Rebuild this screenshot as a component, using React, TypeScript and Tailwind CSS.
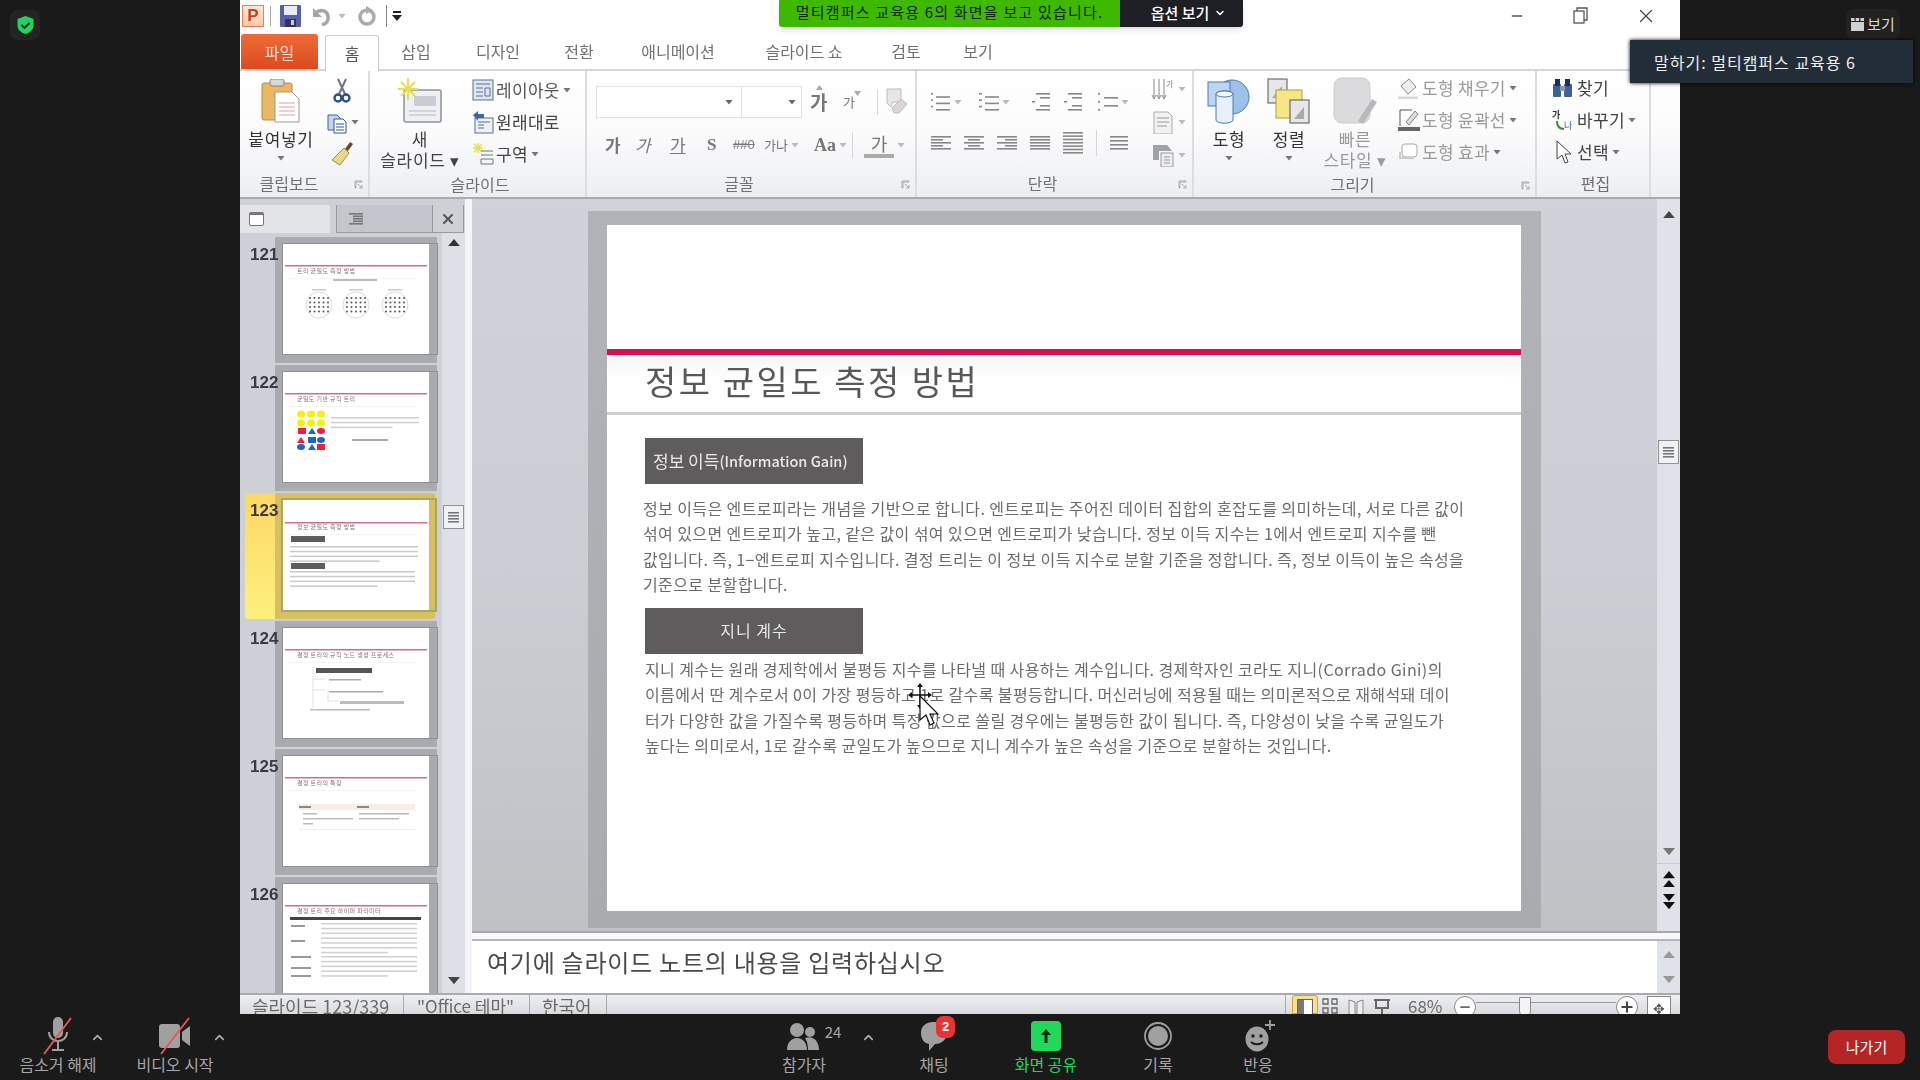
import React from "react";
import { ChevronUp, ChevronDown, Minus, X, Plus } from "lucide-react";

const Caret = ({ c = "#777" }: { c?: string }) => (
  <svg width="8" height="6" viewBox="0 0 8 6" className="shrink-0 mx-[3px]"><path d="M0.5 1h7L4 5.5z" fill={c} /></svg>
);

const Lines = ({ w, c = "#888", h = 20, wd = 20 }: { w: number[][]; c?: string; h?: number; wd?: number }) => (
  <svg width={wd} height={h} viewBox={`0 0 ${wd} ${h}`} className="shrink-0">
    {w.map((l, i) => (
      <rect key={i} x={l[0]} y={(i * (h - 2)) / Math.max(1, w.length - 1)} width={l[1]} height="1.6" fill={c} />
    ))}
  </svg>
);

const Launcher = () => (
  <svg width="10" height="10" viewBox="0 0 10 10"><path d="M1 1h7v1H2v6H1zM4 4l4 4M8 5v3H5" stroke="#aaa" fill="none" strokeWidth="1" /></svg>
);

const Group = ({ w, label, launcher, labelCls = "", children }: { w: string; label: string; launcher?: boolean; labelCls?: string; children: React.ReactNode }) => (
  <div className={`${w} h-full shrink-0 flex flex-col border-r-2 border-[#dcdde0]`}>
    <div className="h-[99px] flex">{children}</div>
    <div className="h-[28px] flex items-center relative">
      <span className={`flex-1 text-center text-[16px] leading-[20px] text-[#707070] ${labelCls}`}>{label}</span>
      {launcher && <span className="absolute right-[4px] top-[11px]"><Launcher /></span>}
    </div>
  </div>
);

const Row = ({ icon, text, caret, color = "#555", iw = "w-[26px]" }: { icon: React.ReactNode; text: string; caret?: boolean; color?: string; iw?: string }) => (
  <div className="h-[32px] flex items-center whitespace-nowrap">
    <span className={`${iw} flex justify-center shrink-0`}>{icon}</span>
    <span className="text-[17px] tracking-[0.3px]" style={{ color }}>{text}</span>
    {caret && <Caret />}
  </div>
);

const Big = ({ w, icon, lines, color = "#333", caret = true }: { w: string; icon: React.ReactNode; lines: string[]; color?: string; caret?: boolean }) => (
  <div className={`${w} shrink-0 flex flex-col items-center pt-[8px]`}>
    <div className="h-[44px] flex items-center justify-center">{icon}</div>
    <div className="mt-[5px] text-[17px] tracking-[0.7px] leading-[21px] text-center whitespace-nowrap" style={{ color }}>
      {lines.map((l) => <div key={l}>{l}</div>)}
    </div>
    {caret && lines.length === 1 && <div className="mt-[6px]"><Caret /></div>}
  </div>
);

const DocIcon = () => (
  <svg width="22" height="24" viewBox="0 0 22 24"><path d="M2 5h9l3 3v12H2z" fill="#c6d6ee" stroke="#39609e" /><path d="M8 9h9l3 3v11H8z" fill="#fff" stroke="#2f5597" /><path d="M10 14h8M10 17h8M10 20h8" stroke="#2f5597" /></svg>
);

const Ribbon = () => (
  <div className="h-[128px] flex bg-gradient-to-b from-[#ffffff] via-[#fbfbfc] to-[#eceef1] border-b-2 border-[#a9abaf]">
    <Group w="w-[130px]" label="클립보드" launcher labelCls="pr-[30px]">
      <Big
        w="w-[82px]"
        lines={["붙여넣기"]}
        icon={
          <svg width="40" height="44" viewBox="0 0 40 44">
            <rect x="1" y="4" width="30" height="37" rx="2" fill="#eab765" stroke="#b98a40" />
            <rect x="9" y="0" width="14" height="7" rx="2" fill="#d8d8d8" stroke="#888" />
            <path d="M14 13h17l7 7v23H14z" fill="#fff" stroke="#999" />
            <path d="M18 24h16M18 28h16M18 32h16M18 36h16" stroke="#d9a0a0" />
          </svg>
        }
      />
      <div className="flex flex-col pt-[4px]">
        <div className="h-[32px] w-[40px] flex justify-center items-center">
          <svg width="18" height="26" viewBox="0 0 18 26"><path d="M5 1l7 15M13 1L6 16" stroke="#6d7480" strokeWidth="2" /><circle cx="5" cy="20" r="3.5" fill="none" stroke="#2c4d95" strokeWidth="2.4" /><circle cx="13" cy="20" r="3.5" fill="none" stroke="#2c4d95" strokeWidth="2.4" /></svg>
        </div>
        <div className="h-[30px] flex items-center pl-[4px]"><DocIcon /><Caret /></div>
        <div className="h-[32px] w-[40px] flex justify-center items-center">
          <svg width="24" height="26" viewBox="0 0 24 26"><path d="M15 9l5-7 3 2-5 7z" fill="#6b4a2a" /><path d="M14 8l5 5-9 12-8-5z" fill="#ecd88a" stroke="#9a8a50" /></svg>
        </div>
      </div>
    </Group>
    <Group w="w-[217px]" label="슬라이드" labelCls="pl-[5px]">
      <Big
        w="w-[100px]"
        lines={["새", "슬라이드 ▾"]}
        color="#444"
        icon={
          <svg width="44" height="46" viewBox="0 0 44 46">
            <rect x="6" y="12" width="37" height="32" rx="2" fill="#eef0f3" stroke="#8f9299" strokeWidth="1.5" />
            <rect x="16" y="18" width="22" height="10" fill="#c9ccd2" />
            <path d="M11 33h27M11 37h27" stroke="#b5b8be" />
            <path d="M10 0v22M0 11h20M3 4l14 14M17 4L3 18" stroke="#e9df4f" strokeWidth="2" />
          </svg>
        }
      />
      <div className="flex flex-col pt-[3px]">
        <Row icon={<svg width="22" height="22" viewBox="0 0 22 22"><rect x="1" y="1" width="20" height="20" fill="#dfe6f1" stroke="#5d6f8f" /><path d="M4 5h14M4 9h7M4 13h7M4 17h7M13 9h5v8h-5z" stroke="#5d6f8f" fill="none" /></svg>} text="레이아웃" caret color="#555" />
        <Row icon={<svg width="22" height="24" viewBox="0 0 22 24"><rect x="3" y="8" width="18" height="15" fill="#eef2f8" stroke="#5d6f8f" /><path d="M6 12h12M6 15h6M6 18h6" stroke="#5d6f8f" /><path d="M1 5l5-4v3h6v4H6v3z" fill="#3c66b5" /></svg>} text="원래대로" color="#444" />
        <Row icon={<svg width="22" height="22" viewBox="0 0 22 22"><path d="M6 0v10M1 5h10M2 1l8 8M10 1L2 9" stroke="#e9df4f" strokeWidth="1.5" /><path d="M9 8h12M9 12h12M9 16h12v5H9z" stroke="#777" fill="none" /></svg>} text="구역" caret color="#444" />
      </div>
    </Group>
    <Group w="w-[330px]" label="글꼴" launcher labelCls="pr-[24px]">
      <div className="flex flex-col pl-[9px] pt-[15px]">
        <div className="h-[32px] flex items-center">
          <div className="w-[146px] h-[32px] border border-[#dfe1e5] bg-white flex items-center justify-end pr-[5px]"><Caret c="#666" /></div>
          <div className="w-[60px] h-[32px] border border-l-0 border-[#dfe1e5] bg-white flex items-center justify-end pr-[2px]"><Caret c="#666" /></div>
          <span className="ml-[8px] w-[30px] text-[19px] font-bold text-[#777] relative">가<span className="absolute left-[6px] -top-[3px]"><svg width="7" height="5"><path d="M0 5h7L3.5 0z" fill="#aaa" /></svg></span></span>
          <span className="ml-[3px] w-[28px] text-[13px] text-[#777] relative">가<span className="absolute left-[11px] -top-[1px]"><svg width="7" height="5"><path d="M0 0h7L3.5 5z" fill="#aaa" /></svg></span></span>
          <span className="ml-[6px] w-px h-[26px] bg-[#d5d6d9]" />
          <svg className="ml-[7px]" width="24" height="28" viewBox="0 0 24 28"><path d="M2 1h14v13H8l-2 5-4-4z" fill="#e6e6e6" stroke="#bbb" /><path d="M7 20l9-9 6 5-8 9H9z" fill="#dcd4d6" stroke="#bbb" /></svg>
        </div>
        <div className="h-[30px] mt-[12px] flex items-center text-[#777]">
          <span className="w-[32px] pl-[9px] text-[17px] font-bold">가</span>
          <span className="w-[33px] pl-[7px] text-[17px] italic">가</span>
          <span className="w-[35px] pl-[9px] text-[17px] underline">가</span>
          <span className="w-[34px] pl-[11px] text-[17px] font-bold font-['Liberation_Serif',serif]">S</span>
          <span className="w-[34px] pl-[3px] text-[13px] line-through font-['Liberation_Sans',sans-serif]">##0</span>
          <span className="w-[46px] pl-[0px] text-[13px] leading-[12px] flex items-center">가나<Caret c="#bbb" /></span>
          <span className="w-[42px] pl-[4px] text-[18px] font-bold font-['Liberation_Serif',serif] flex items-center">Aa<Caret c="#bbb" /></span>
          <span className="w-px h-[26px] bg-[#d5d6d9]" />
          <span className="ml-[11px] w-[30px] text-[18px] border-b-[4px] border-[#aaa] leading-[22px] text-center">가</span>
          <Caret c="#bbb" />
        </div>
      </div>
    </Group>
    <Group w="w-[277px]" label="단락" launcher labelCls="pr-[24px]">
      <div className="flex flex-col pl-[14px] pt-[18px] w-[216px]">
        <div className="h-[26px] flex items-center">
          <Lines w={[[0, 2], [5, 14], [0, 2], [5, 14], [0, 2], [5, 14]]} h={18} />
          <Caret c="#bbb" />
          <span className="w-[14px]" />
          <Lines w={[[0, 3], [6, 14], [0, 3], [6, 14], [0, 3], [6, 14]]} h={18} />
          <Caret c="#bbb" />
          <span className="w-[19px]" />
          <Lines w={[[4, 14], [8, 10], [0, 3], [8, 10], [4, 14]]} h={18} />
          <span className="w-[12px]" />
          <Lines w={[[4, 14], [8, 10], [0, 3], [8, 10], [4, 14]]} h={18} />
          <span className="w-[14px]" />
          <Lines w={[[0, 2], [6, 14], [0, 2], [6, 14], [0, 2]]} h={18} />
          <Caret c="#bbb" />
        </div>
        <div className="h-[26px] mt-[15px] flex items-center gap-[13px]">
          <Lines w={[[0, 20], [0, 12], [0, 20], [0, 12], [0, 20]]} h={14} />
          <Lines w={[[0, 20], [4, 12], [0, 20], [4, 12], [0, 20]]} h={14} />
          <Lines w={[[0, 20], [8, 12], [0, 20], [8, 12], [0, 20]]} h={14} />
          <Lines w={[[0, 20], [0, 20], [0, 20], [0, 20], [0, 20]]} h={14} />
          <Lines w={[[0, 20], [0, 20], [0, 20], [0, 20], [0, 20], [0, 20], [0, 20]]} h={22} />
          <span className="w-px h-[26px] bg-[#d5d6d9]" />
          <Lines w={[[0, 18], [0, 18], [0, 18], [0, 18]]} h={14} wd={18} />
        </div>
      </div>
      <div className="flex flex-col pt-[5px] pl-[18px] gap-[7px]">
        <div className="flex items-center h-[26px]"><svg width="24" height="24" viewBox="0 0 24 24"><path d="M3 2v18M8 2v18M13 2v18M1 18l2 4 2-4M6 18l2 4 2-4M11 18l2 4 2-4" stroke="#888" fill="none" /><text x="15" y="10" fontSize="8" fill="#888">가</text></svg><Caret c="#bbb" /></div>
        <div className="flex items-center h-[26px]"><svg width="24" height="24" viewBox="0 0 24 24"><path d="M3 2h14l4 4v18H3z" fill="#f2f2f2" stroke="#aaa" /><path d="M6 8h12M6 12h12M6 16h10" stroke="#999" /></svg><Caret c="#bbb" /></div>
        <div className="flex items-center h-[26px]"><svg width="24" height="24" viewBox="0 0 24 24"><path d="M2 2h14l5 6H8v9H2z" fill="#9fa3a9" /><rect x="10" y="10" width="12" height="14" fill="#eee" stroke="#999" /><path d="M13 14h6M13 17h6M13 20h6" stroke="#999" /></svg><Caret c="#bbb" /></div>
      </div>
    </Group>
    <Group w="w-[343px]" label="그리기" launcher labelCls="pr-[24px]">
      <Big
        w="w-[70px]"
        lines={["도형"]}
        icon={
          <svg width="44" height="46" viewBox="0 0 44 46">
            <circle cx="25" cy="19" r="17" fill="#9cc2ea" stroke="#4d79b5" />
            <rect x="1" y="4" width="22" height="24" fill="#bcd5f0" stroke="#4d79b5" />
            <path d="M9 16a8 3 0 0 1 17 0v26a8 3 0 0 1-17 0z" fill="#e6f1fb" stroke="#4d79b5" />
            <ellipse cx="17.500" cy="16" rx="8.500" ry="3" fill="#f4f9fe" stroke="#4d79b5" />
          </svg>
        }
      />
      <Big
        w="w-[50px]"
        lines={["정렬"]}
        icon={
          <svg width="44" height="46" viewBox="0 0 44 46">
            <rect x="1" y="1" width="19" height="24" fill="#e7e7e9" stroke="#555" />
            <path d="M5 20l10-12v12z" fill="#a9a9ad" />
            <rect x="9" y="12" width="26" height="28" fill="#f6e686" stroke="#b69c3a" />
            <rect x="23" y="22" width="19" height="23" fill="#e7e7e9" stroke="#555" />
            <path d="M27 41l10-12v12z" fill="#a9a9ad" />
          </svg>
        }
      />
      <Big
        w="w-[82px]"
        lines={["빠른", "스타일 ▾"]}
        color="#9a9a9a"
        icon={
          <svg width="46" height="48" viewBox="0 0 46 48">
            <rect x="2" y="1" width="36" height="45" rx="8" fill="#dbdadc" stroke="#ccc" />
            <path d="M26 44l14-22 5 3-14 22z" fill="#b9b8ba" />
          </svg>
        }
      />
      <div className="flex flex-col pt-[1px]">
        <Row color="#9a9a9a" icon={<svg width="22" height="22" viewBox="0 0 22 22"><path d="M3 9l8-7 7 8-8 7z" fill="#eee" stroke="#888" /><path d="M0 21h20" stroke="#d8d8d8" strokeWidth="3" /></svg>} text="도형 채우기" caret />
        <Row color="#9a9a9a" icon={<svg width="22" height="24" viewBox="0 0 22 24"><path d="M2 2h12M2 2v16" stroke="#555" /><path d="M8 14l9-11 3 3-9 11z" fill="#ddd" stroke="#888" /><rect x="0" y="19" width="22" height="4" fill="#666" /></svg>} text="도형 윤곽선" caret />
        <Row color="#9a9a9a" icon={<svg width="22" height="20" viewBox="0 0 22 20"><rect x="4" y="2" width="15" height="13" rx="3" fill="#fff" stroke="#aaa" /><path d="M2 10v6h14" stroke="#ccc" strokeWidth="2" fill="none" /></svg>} text="도형 효과" caret />
      </div>
    </Group>
    <Group w="w-[114px]" label="편집" labelCls="pl-[5px]">
      <div className="flex flex-col pt-[1px] pl-[11px]">
        <Row color="#444" iw="w-[29px]" icon={<svg width="22" height="20" viewBox="0 0 22 20"><rect x="1" y="6" width="8" height="13" rx="1" fill="#3c5f9e" /><rect x="12" y="6" width="8" height="13" rx="1" fill="#3c5f9e" /><rect x="3" y="1" width="5" height="7" fill="#222f55" /><rect x="13" y="1" width="5" height="7" fill="#222f55" /><rect x="8" y="8" width="5" height="5" fill="#8b96ac" /></svg>} text="찾기" />
        <Row color="#444" iw="w-[29px]" icon={<svg width="22" height="24" viewBox="0 0 22 24"><text x="0" y="10" fontSize="9" fontWeight="700" fill="#333">가</text><path d="M5 13c0 6 3 8 7 8" stroke="#3a8a3a" fill="none" strokeWidth="2" /><text x="12" y="21" fontSize="9" fill="#3c5f9e">나</text></svg>} text="바꾸기" caret />
        <Row color="#444" iw="w-[29px]" icon={<svg width="18" height="24" viewBox="0 0 18 24"><path d="M3 1v18l5-4 3 8 3-1-3-8h6z" fill="#fff" stroke="#444" /></svg>} text="선택" caret />
      </div>
    </Group>
    <div className="flex-1" />
  </div>
);

const Tabs = () => {
  const t: [string, string][] = [
    ["삽입", "w-[74px]"],
    ["디자인", "w-[90px]"],
    ["전환", "w-[72px]"],
    ["애니메이션", "w-[126px]"],
    ["슬라이드 쇼", "w-[126px]"],
    ["검토", "w-[78px]"],
    ["보기", "w-[66px]"],
  ];
  return (
    <div className="h-[36px] flex items-end bg-white border-b-2 border-[#d5d6d9] pl-[1px]">
      <div className="w-[77px] h-[35px] rounded-t-[3px] bg-gradient-to-b from-[#ef6a38] to-[#dd4a1d] text-[#ffe3d4] text-[16px] flex items-center justify-center">파일</div>
      <div className="ml-[7px] w-[54px] h-[36px] -mb-[2px] bg-white border border-b-0 border-[#c8c9cc] rounded-t-[3px] text-[#555] text-[16px] flex items-center justify-center pb-[2px]">홈</div>
      <div className="flex">
        {t.map(([s, w]) => (
          <div key={s} className={`${w} h-[35px] pb-[2px] text-[#707070] text-[16px] flex items-center justify-center whitespace-nowrap`}>{s}</div>
        ))}
      </div>
    </div>
  );
};

const TitleBar = () => (
  <div className="h-[35px] bg-white flex items-center pl-[2px] pb-[4px]">
    <div className="w-[22px] h-[22px] border border-[#e6824f] bg-gradient-to-b from-[#ffe9dd] to-[#f8c7ac] flex items-center justify-center text-[#cf3f14] text-[17px] font-bold leading-none font-['Liberation_Sans',sans-serif]">P</div>
    <span className="ml-[6px] w-px h-[20px] bg-[#aaa]" />
    <svg className="ml-[9px]" width="21" height="22" viewBox="0 0 21 22"><rect width="21" height="22" rx="1" fill="#5560a8" /><rect x="4" y="1" width="13" height="9" fill="#e9ebf3" /><rect x="5" y="14" width="11" height="8" fill="#30345a" /><rect x="11" y="15" width="3" height="5" fill="#ccc" /></svg>
    <svg className="ml-[11px]" width="20" height="20" viewBox="0 0 20 20"><path d="M3 8c5-6 14-4 13 5-.4 3-3 5-6 6" stroke="#a2a5ab" strokeWidth="3.500" fill="none" /><path d="M1 2v9h9z" fill="#a2a5ab" /></svg>
    <span className="ml-[3px]"><Caret c="#bbb" /></span>
    <svg className="ml-[8px]" width="20" height="20" viewBox="0 0 20 20"><circle cx="10" cy="11" r="7" stroke="#a9abb0" strokeWidth="3.500" fill="none" /><path d="M9 0l7 4-7 4z" fill="#a9abb0" /></svg>
    <span className="ml-[9px] w-px h-[22px] bg-[#888]" />
    <svg className="ml-[5px]" width="10" height="12" viewBox="0 0 10 12"><rect x="1" y="1" width="8" height="2" fill="#222" /><path d="M0 5h10L5 11z" fill="#222" /></svg>
    <div className="flex-1" />
    <Minus className="text-[#555] mr-[48px]" size={16} strokeWidth={2} />
    <svg className="mr-[47px]" width="15" height="17" viewBox="0 0 15 17"><rect x="1" y="4" width="10" height="12" fill="#fff" stroke="#555" strokeWidth="1.300" /><path d="M4 4V1h10v12h-3" fill="none" stroke="#555" strokeWidth="1.300" /></svg>
    <X className="text-[#444] mr-[23px]" size={22} strokeWidth={1.3} />
  </div>
);

const Title = ({ t }: { t: string }) => (
  <text x="14" y="29" fontSize="6" fill="#777" letterSpacing="0.4">{t}</text>
);
const Base = ({ children, t, line = 21 }: { children?: React.ReactNode; t: string; line?: number }) => (
  <svg width="146" height="110" viewBox="0 0 146 110" className="block bg-white">
    <rect x="2" y={line} width="142" height="1.500" fill="#d46a8e" />
    <Title t={t} />
    <rect x="4" y="34" width="130" height="0.600" fill="#eee" />
    {children}
  </svg>
);

const Dots = ({ cx }: { cx: number }) => (
  <g>
    <circle cx={cx} cy="61" r="13" fill="#fff" stroke="#ddd" />
    {[0, 1, 2, 3].map((r) => [0, 1, 2, 3, 4].map((c) => (
      <circle key={`${r}${c}`} cx={cx - 9 + c * 4.500} cy={54 + r * 4.500} r="1" fill="#555" />
    )))}
    <rect x={cx - 7} y="45" width="14" height="1.500" fill="#ccc" />
  </g>
);

const greek = (y: number, n: number, x = 7, w = 128, c = "#c9c9c9") =>
  Array.from({ length: n }).map((_, i) => <rect key={`${y}${i}`} x={x} y={y + i * 4.800} width={i === n - 1 ? w * 0.7 : w} height="1.500" fill={c} />);

const thumbs: { n: number; art: React.ReactNode }[] = [
  { n: 121, art: <Base t="트리 균일도 측정 방법"><rect x="50" y="35" width="44" height="2" fill="#bbb" /><Dots cx={36} /><Dots cx={73} /><Dots cx={112} /></Base> },
  {
    n: 122,
    art: (
      <Base t="균일도 기반 규칙 트리">
        {[0, 1].map((r) => [0, 1, 2].map((c) => <ellipse key={`y${r}${c}`} cx={18 + c * 10} cy={42 + r * 9} rx="4" ry="3.500" fill="#f6f200" />))}
        <rect x="15" y="56" width="8" height="6" fill="#ef1d3e" /><path d="M29 56l4 6h-8z" fill="#1d64c8" /><ellipse cx="38" cy="59" rx="4" ry="3" fill="#ef1d3e" />
        <path d="M18 65l4 6h-8z" fill="#ef1d3e" /><rect x="25" y="65" width="8" height="6" fill="#1d64c8" /><ellipse cx="38" cy="68" rx="4" ry="3" fill="#1d64c8" />
        <ellipse cx="18" cy="75" rx="4" ry="3" fill="#1d64c8" /><path d="M29 72l4 6h-8z" fill="#1d64c8" /><rect x="34" y="72" width="8" height="6" fill="#ef1d3e" />
        {greek(45, 3, 48, 88, "#d0d0d0")}
        <rect x="69" y="67" width="36" height="2" fill="#aaa" />
      </Base>
    ),
  },
  {
    n: 123,
    art: (
      <Base t="정보 균일도 측정 방법" line={22}>
        <rect x="8" y="36" width="34" height="6" fill="#5f5c5d" />
        {greek(46, 4, 7, 128)}
        <rect x="8" y="63" width="34" height="6" fill="#5f5c5d" />
        {greek(71, 4, 7, 125)}
      </Base>
    ),
  },
  {
    n: 124,
    art: (
      <Base t="결정 트리의 규칙 노드 생성 프로세스">
        <rect x="33" y="40" width="56" height="5" fill="#555" />
        <path d="M30 38v42M30 51h12M30 62h12M45 62v11h10" stroke="#ccc" fill="none" strokeWidth="0.600" />
        <rect x="46" y="51" width="32" height="1.500" fill="#aaa" />
        <rect x="46" y="63" width="54" height="1.500" fill="#aaa" />
        <rect x="57" y="73" width="64" height="3" fill="#bbb" />
        <rect x="27" y="81" width="60" height="1.500" fill="#bbb" />
      </Base>
    ),
  },
  {
    n: 125,
    art: (
      <Base t="결정 트리의 특징">
        <rect x="16" y="48" width="116" height="6" fill="#f8ede8" />
        <rect x="16" y="50" width="12" height="2" fill="#888" /><rect x="74" y="50" width="12" height="2" fill="#888" />
        <rect x="20" y="57" width="14" height="1.500" fill="#bbb" /><rect x="76" y="57" width="50" height="1.500" fill="#bbb" />
        <rect x="20" y="62" width="50" height="1.500" fill="#bbb" /><rect x="76" y="62" width="40" height="1.500" fill="#bbb" />
        <rect x="20" y="67" width="10" height="1.500" fill="#bbb" />
        <rect x="16" y="73" width="116" height="0.600" fill="#f4dada" />
      </Base>
    ),
  },
  {
    n: 126,
    art: (
      <Base t="결정 트리 주요 하이퍼 파라미터">
        <rect x="7" y="33" width="131" height="3" fill="#444" />
        {greek(39, 7, 38, 96, "#d0d0d0")}
        <rect x="8" y="41" width="14" height="2" fill="#999" /><rect x="8" y="56" width="14" height="2" fill="#999" />
        {greek(72, 5, 38, 96, "#d0d0d0")}
        <rect x="8" y="72" width="20" height="2" fill="#999" /><rect x="8" y="83" width="20" height="2" fill="#999" /><rect x="8" y="91" width="20" height="2" fill="#999" />
      </Base>
    ),
  },
];

const Tri = ({ up, c = "#555", w = 12 }: { up?: boolean; c?: string; w?: number }) => (
  <svg width={w} height={w * 0.6} viewBox="0 0 10 6"><path d={up ? "M0 6h10L5 0z" : "M0 0h10L5 6z"} fill={c} /></svg>
);
const Handle = ({ cls }: { cls: string }) => (
  <div className={`${cls} w-[21px] h-[24px] bg-[#f0f1f4] border border-[#8f9299] flex items-center justify-center`}>
    <Lines w={[[0, 11], [0, 11], [0, 11], [0, 11]]} h={11} wd={11} c="#777" />
  </div>
);

const ThumbPane = () => (
  <div className="w-[225px] shrink-0 flex flex-col bg-[#cdd0d6]">
    <div className="h-[28px] flex mt-[6px] bg-[#ced0d6]">
      <div className="w-[90px] bg-[#e3e4e8] flex items-center pl-[9px]">
        <div className="w-[15px] h-[14px] bg-white border border-[#777] rounded-[2px] border-t-[3px]" />
      </div>
      <div className="w-[6px]" />
      <div className="w-[97px] bg-[#c3c6cc] border-b border-x border-[#999] flex items-center pl-[10px]">
        <Lines w={[[2, 14], [6, 10], [6, 10], [6, 10], [2, 14]]} h={12} wd={16} c="#777" />
      </div>
      <div className="w-[31px] border-b border-r border-[#999] flex items-center justify-center">
        <X size={16} strokeWidth={3} className="text-[#555]" />
      </div>
    </div>
    <div className="flex-1 flex min-h-0">
      <div className="w-[202px] overflow-hidden pt-[4px]">
        {thumbs.map((t) => {
          const sel = t.n === 123;
          return (
            <div key={t.n} className="h-[128px] flex">
              <div className={`shrink-0 relative z-10 h-[126px] text-[17px] leading-[24px] font-bold text-[#3a3a42] font-['Liberation_Sans',sans-serif] ${sel ? "ml-[5px] w-[30px] pl-[5px] pt-[6px] bg-gradient-to-b from-[#fdd765] to-[#fef07e] rounded-l-[3px]" : "w-[35px] pl-[10px] pt-[6px]"}`}>
                <span className="relative">{t.n}</span>
              </div>
              <div className={`shrink-0 h-[126px] pl-[8px] pt-[7px] ${sel ? "w-[160px] bg-[#d7bf62] rounded-r-[3px]" : "w-[162px] bg-[#a9abb1]"}`}>
                <div className={sel ? "outline-2 outline-[#a5ab5a]" : "outline outline-[#8d8f95]"}>{t.art}</div>
              </div>
            </div>
          );
        })}
      </div>
      <div className="w-[23px] bg-[#dde0e7] flex flex-col items-center pt-[6px] pb-[9px]">
        <Tri up c="#333" />
        <Handle cls="mt-[259px]" />
        <div className="flex-1" />
        <Tri c="#444" />
      </div>
    </div>
  </div>
);

const P1 = [
  "정보 이득은 엔트로피라는 개념을 기반으로 합니다. 엔트로피는 주어진 데이터 집합의 혼잡도를 의미하는데, 서로 다른 값이",
  "섞여 있으면 엔트로피가 높고, 같은 값이 섞여 있으면 엔트로피가 낮습니다. 정보 이득 지수는 1에서 엔트로피 지수를 뺀",
  "값입니다. 즉, 1−엔트로피 지수입니다. 결정 트리는 이 정보 이득 지수로 분할 기준을 정합니다. 즉, 정보 이득이 높은 속성을",
  "기준으로 분할합니다.",
];
const P2 = [
  "지니 계수는 원래 경제학에서 불평등 지수를 나타낼 때 사용하는 계수입니다. 경제학자인 코라도 지니(Corrado Gini)의",
  "이름에서 딴 계수로서 0이 가장 평등하고 1로 갈수록 불평등합니다. 머신러닝에 적용될 때는 의미론적으로 재해석돼 데이",
  "터가 다양한 값을 가질수록 평등하며 특정 값으로 쏠릴 경우에는 불평등한 값이 됩니다. 즉, 다양성이 낮을 수록 균일도가",
  "높다는 의미로서, 1로 갈수록 균일도가 높으므로 지니 계수가 높은 속성을 기준으로 분할하는 것입니다.",
];

const Slide = () => (
  <div className="relative w-[914px] h-[686px] bg-white flex flex-col">
    <div className="h-[124px] shrink-0" />
    <div className="h-[6px] bg-[#d5114e] shrink-0" />
    <div className="h-[56px] shrink-0 pl-[38px] pt-[1px] text-[34px] leading-[50px] tracking-[2.500px] text-[#58585a] border-b-[3px] border-[#cfd0d2] bg-gradient-to-b from-[#f4f5f8] to-white to-[40%] box-content -mb-[3px]">정보 균일도 측정 방법</div>
    <div className="pl-[38px] mt-[26px]">
      <div className="w-[218px] h-[46px] bg-[#5f5c5d] text-[#e8e8e8] text-[17px] flex items-center pl-[8px] whitespace-nowrap">정보 이득<span className="text-[14.500px] font-medium">(Information Gain)</span></div>
    </div>
    <div className="pl-[36px] mt-[12px] text-[16px] tracking-[0.400px] leading-[25.300px] text-[#6b6b6b] whitespace-nowrap">
      {P1.map((l) => <div key={l}>{l}</div>)}
    </div>
    <div className="pl-[38px] mt-[11px]">
      <div className="w-[218px] h-[46px] bg-[#5f5c5d] text-[#e8e8e8] text-[16px] flex items-center justify-center tracking-[1px] pb-[3px]">지니 계수</div>
    </div>
    <div className="pl-[38px] mt-[3px] text-[16px] tracking-[0.400px] leading-[25.300px] text-[#6b6b6b] whitespace-nowrap">
      {P2.map((l) => <div key={l}>{l}</div>)}
    </div>
    <svg className="absolute left-[298px] top-[458px]" width="34" height="44" viewBox="0 0 34 44">
      <path d="M15 1v22M5 12h20" stroke="#111" strokeWidth="1.500" />
      <path d="M15 0l-3 4h6zM15 26l-3-4h6zM3 12l4-3v6zM27 12l-4-3v6z" fill="#111" />
      <path d="M15 13v24l6-5 4 10 4-2-4-9h8z" fill="#fff" stroke="#111" strokeWidth="1.200" />
    </svg>
  </div>
);

const SlidePane = () => (
  <div className="flex-1 min-w-0 flex flex-col bg-[#f5f5f7] pl-[7px]">
    <div className="h-[732px] flex bg-gradient-to-b from-[#cfd2d9] via-[#cbced4] to-[#bfc1c5]">
      <div className="flex-1 pl-[116px] pt-[12px]">
        <div className="w-[953px] h-[717px] bg-gradient-to-b from-[#b0b3b8] to-[#a9abae] pt-[14px] pl-[19px]">
          <Slide />
        </div>
      </div>
      <div className="w-[23px] bg-[#dfe2e9] flex flex-col items-center pt-[12px]">
        <Tri up c="#444" />
        <Handle cls="mt-[222px]" />
        <div className="mt-[384px]"><Tri c="#777" /></div>
        <div className="mt-[8px] w-full border-t border-[#c8c9cc] pt-[7px] flex flex-col items-center gap-[1px]">
          <Tri up c="#111" /><Tri up c="#111" />
          <div className="h-[5px]" />
          <Tri c="#111" /><Tri c="#111" />
        </div>
      </div>
    </div>
    <div className="h-[10px] bg-[#f8f8fa] border-t-2 border-b-2 border-t-[#a6a8ac] border-b-[#b5b6ba]" />
    <div className="flex-1 flex bg-white">
      <div className="flex-1 pl-[15px] pt-[4px] text-[24px] leading-[34px] text-[#4a4a4a] tracking-[0.750px]">여기에 슬라이드 노트의 내용을 입력하십시오</div>
      <div className="w-[23px] bg-[#dfe2e9] flex flex-col items-center pt-[10px] gap-[18px]">
        <Tri up c="#999" /><Tri c="#999" />
      </div>
    </div>
  </div>
);

const StatusBar = () => (
  <div className="h-[21px] shrink-0 flex items-start bg-gradient-to-b from-[#eff0f2] to-[#d8dade] border-t-2 border-[#a9abaf] overflow-hidden text-[#6a6a6a] text-[17px] leading-[22px]">
    <span className="ml-[12px] w-[151px] whitespace-nowrap text-[18px]">슬라이드 123/339</span>
    <span className="w-px h-full bg-[#aaa]" />
    <span className="ml-[13px] w-[112px] whitespace-nowrap">"Office 테마"</span>
    <span className="w-px h-full bg-[#aaa]" />
    <span className="ml-[12px] w-[64px] whitespace-nowrap text-[18px]">한국어</span>
    <span className="w-px h-full bg-[#aaa]" />
    <div className="flex-1" />
    <span className="w-px h-full bg-[#aaa] mr-[6px]" />
    <div className="w-[26px] h-full bg-[#fbe08a] border border-[#d99c3a] rounded-t-[3px] flex justify-center items-start pt-[3px]">
      <svg width="16" height="16"><rect x="0.500" y="0.500" width="15" height="15" fill="#fff" stroke="#666" /><rect x="1" y="1" width="6" height="14" fill="#777" /></svg>
    </div>
    <svg className="ml-[4px] mt-[3px]" width="16" height="18"><path d="M1 1h5v5H1zM10 1h5v5h-5zM1 10h5v5H1zM10 10h5v5h-5z" fill="none" stroke="#666" strokeWidth="1.300" /></svg>
    <svg className="ml-[10px] mt-[3px]" width="16" height="18"><path d="M1 2l6 2v14l-6-2zM15 2l-6 2v14l6-2z" fill="#eee" stroke="#888" /></svg>
    <svg className="ml-[10px] mt-[3px]" width="16" height="18"><path d="M0 2h16M2 2v8h12V2M8 10v8" fill="none" stroke="#666" strokeWidth="2" /></svg>
    <span className="ml-[18px] w-[43px] whitespace-nowrap">68%</span>
    <span className="ml-[3px] mt-[1px] w-[22px] h-[22px] rounded-full border border-[#8a8a8a] bg-white flex items-center justify-center"><Minus size={14} strokeWidth={3} /></span>
    <div className="w-[140px] flex items-center h-[14px] relative">
      <span className="w-full h-px bg-[#999]" />
      <span className="absolute left-[43px] top-[2px] w-[12px] h-[20px] bg-[#f4f4f6] border border-[#888] rounded-b-[6px]" />
    </div>
    <span className="mt-[1px] w-[22px] h-[22px] rounded-full border border-[#8a8a8a] bg-white flex items-center justify-center text-[#444]"><Plus size={16} strokeWidth={3} /></span>
    <span className="ml-[9px] mt-[1px] w-[24px] h-[24px] border border-[#8a8a8a] bg-white flex items-center justify-center text-[#555] text-[14px]">✥</span>
    <span className="w-[9px]" />
  </div>
);

const Tool = ({ w, label, icon, green, chev, chevRight }: { w: string; label: string; icon: React.ReactNode; green?: boolean; chev?: boolean; chevRight?: string }) => (
  <div className={`${w} shrink-0 relative flex flex-col items-center pt-[7px]`}>
    <div className="h-[30px] flex items-center justify-center">{icon}</div>
    <div className={`mt-[3px] text-[16px] leading-[20px] whitespace-nowrap ${green ? "text-[#25d45c]" : "text-[#a6a6a6]"}`}>{label}</div>
    {chev && <ChevronUp className={`absolute top-[16px] ${chevRight} text-[#b0b0b0]`} size={15} strokeWidth={2.500} />}
  </div>
);

const Toolbar = () => (
  <div className="h-[66px] shrink-0 flex items-start bg-[#1a1a1a]">
    <Tool w="w-[116px]" label="음소거 해제" chev chevRight="right-[11px]" icon={
      <svg width="32" height="40" viewBox="0 0 32 40">
        <rect x="11" y="1" width="10" height="21" rx="5" fill="#a0a0a0" />
        <path d="M7 16c0 12 18 12 18 0M16 26v7M10 34h12" stroke="#a0a0a0" strokeWidth="2" fill="none" />
        <path d="M2 38L29 2" stroke="#ee5555" strokeWidth="1.800" />
      </svg>
    } />
    <Tool w="w-[118px]" label="비디오 시작" chev chevRight="right-[7px]" icon={
      <svg width="32" height="40" viewBox="0 0 32 40">
        <rect x="0" y="8" width="21" height="24" rx="3" fill="#a0a0a0" />
        <path d="M23 16l8-6v20l-8-6z" fill="#a0a0a0" />
        <path d="M2 38L30 2" stroke="#ee5555" strokeWidth="1.800" />
      </svg>
    } />
    <div className="w-[510px] shrink-0" />
    <Tool w="w-[120px]" label="참가자" chev chevRight="right-[-12px]" icon={
      <div className="flex items-start gap-[6px] translate-x-[10px]">
        <svg width="32" height="28" viewBox="0 0 32 28">
          <circle cx="10" cy="8" r="7" fill="#a0a0a0" />
          <circle cx="23" cy="10" r="5" fill="#a0a0a0" />
          <path d="M0 28c0-16 20-16 20 0zM18 16c8-3 14 3 14 12H21c0-5-1-9-3-12z" fill="#a0a0a0" />
        </svg>
        <span className="text-[#a6a6a6] text-[15px] leading-[20px]">24</span>
      </div>
    } />
    <Tool w="w-[140px]" label="채팅" icon={
      <div className="relative">
        <svg width="28" height="32" viewBox="0 0 28 32"><path d="M1 13C1 6 6 2 13 2h2c7 0 12 5 12 11s-5 11-12 11l-6 7v-7C4 23 1 19 1 13z" fill="#a0a0a0" /></svg>
        <span className="absolute left-[16px] -top-[4px] w-[19px] h-[22px] rounded-[7px] bg-[#e53434] text-white text-[13px] font-bold flex items-center justify-center font-['Liberation_Sans',sans-serif]">2</span>
      </div>
    } />
    <Tool w="w-[84px]" label="화면 공유" green icon={
      <div className="w-[30px] h-[30px] rounded-[4px] bg-[#22d85c] flex items-center justify-center">
        <svg width="12" height="16" viewBox="0 0 12 16"><path d="M6 1L1 7h3.500v8h3V7H11z" fill="#0c2a14" /></svg>
      </div>
    } />
    <Tool w="w-[140px]" label="기록" icon={
      <svg width="28" height="28" viewBox="0 0 28 28"><circle cx="14" cy="14" r="13" fill="none" stroke="#a0a0a0" strokeWidth="1.800" /><circle cx="14" cy="14" r="10" fill="#a0a0a0" /></svg>
    } />
    <Tool w="w-[60px]" label="반응" icon={
      <svg className="translate-x-[2px]" width="30" height="32" viewBox="0 0 30 32">
        <ellipse cx="12" cy="19" rx="11.500" ry="12.500" fill="#a0a0a0" />
        <circle cx="8" cy="16" r="1.700" fill="#1a1a1a" /><circle cx="16" cy="16" r="1.700" fill="#1a1a1a" />
        <path d="M6 22c3 3 9 3 12 0" stroke="#1a1a1a" strokeWidth="1.800" fill="none" />
        <path d="M25 0v10M20 5h10" stroke="#a0a0a0" strokeWidth="1.800" />
      </svg>
    } />
    <div className="flex-1" />
    <div className="mt-[16px] mr-[15px] w-[77px] h-[34px] rounded-[8px] bg-[#b52525] text-white text-[15px] flex items-center justify-center">나가기</div>
  </div>
);

export default function App() {
  return (
    <div className="relative w-[1920px] h-[1080px] overflow-hidden bg-[#1a1a1a] flex flex-col font-['Noto_Sans_CJK_KR','Noto_Sans',sans-serif]">
      <div className="h-[1014px] flex shrink-0">
        <div className="w-[240px] shrink-0 pl-[10px] pt-[10px]">
          <div className="w-[30px] h-[30px] rounded-[8px] bg-[#242424] flex items-center justify-center">
            <svg width="17" height="18" viewBox="0 0 17 18"><path d="M8.500 0l8 3v6c0 5-4 8-8 9-4-1-8-4-8-9V3z" fill="#22d45a" /><path d="M4.500 9l3 3 5-5" stroke="#123" strokeWidth="1.800" fill="none" /></svg>
          </div>
        </div>
        <div className="w-[1440px] shrink-0 flex flex-col bg-white blur-[0.5px]">
          <TitleBar />
          <Tabs />
          <Ribbon />
          <div className="flex-1 min-h-0 flex">
            <ThumbPane />
            <SlidePane />
          </div>
          <StatusBar />
        </div>
        <div className="flex-1 flex justify-end pr-[20px] pt-[9px]">
          <div className="w-[54px] h-[31px] rounded-[8px] bg-[#222222] flex items-center justify-center gap-[3px] text-[#d8d8d8] text-[15px]">
            <svg width="13" height="13" viewBox="0 0 13 13"><rect y="4" width="13" height="9" fill="#d0d0d0" /><rect y="0" width="3.500" height="3" fill="#d0d0d0" /><rect x="4.700" y="0" width="3.500" height="3" fill="#d0d0d0" /><rect x="9.500" y="0" width="3.500" height="3" fill="#d0d0d0" /></svg>
            보기
          </div>
        </div>
      </div>
      <Toolbar />
      <div className="absolute left-[779px] top-0 h-[27px] w-[464px] flex rounded-b-[3px] overflow-hidden shadow-md">
        <div className="w-[341px] bg-[#3fb900] text-[#10240a] text-[15px] tracking-[1.200px] flex items-center justify-center whitespace-nowrap pb-[2px]">멀티캠퍼스 교육용 6의 화면을 보고 있습니다.</div>
        <div className="flex-1 bg-[#1d1f24] text-white text-[15px] font-medium flex items-center justify-center gap-[5px] pl-[14px] pb-[1px]">옵션 보기<ChevronDown size={12} strokeWidth={3} /></div>
      </div>
      <div className="absolute left-[1630px] top-[40px] w-[283px] h-[43px] bg-[#232d38] shadow-[0_0_4px_#000] text-[#f0f0f0] text-[16px] tracking-[1px] flex items-center pl-[24px] whitespace-nowrap">말하기: 멀티캠퍼스 교육용 6</div>
    </div>
  );
}
